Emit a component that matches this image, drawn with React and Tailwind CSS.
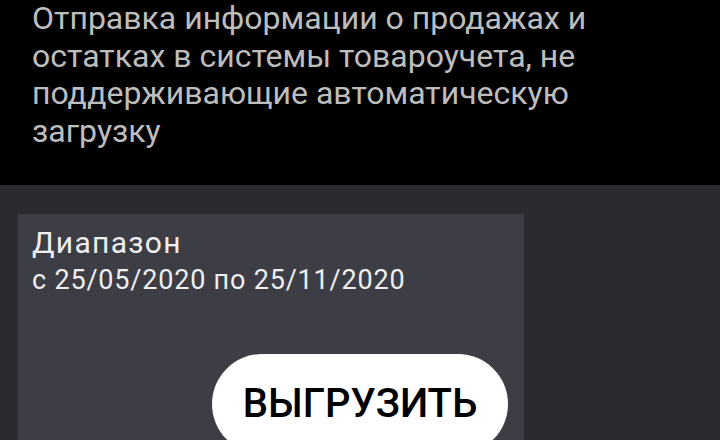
export default function App() {
  return (
    <div className="h-[440px] w-full overflow-hidden bg-[#2b2a30] font-['Roboto',sans-serif]">
      {/* Описание */}
      <div className="bg-black pl-8 pr-[60px] pb-[35px]">
        <p className="text-[32px] leading-[37.5px] text-[#bdbdbd]">
          Отправка информации о продажах и остатках в системы товароучета, не поддерживающие автоматическую загрузку
        </p>
      </div>

      {/* Карточка диапазона */}
      <div className="px-[18px] pt-[29px]">
        <div className="w-[506px] bg-[#3d3d46] pl-[14px] pr-4 pt-[12px]">
          <div className="text-[30px] leading-[34px] tracking-[1.3px] text-[#efefef]">Диапазон</div>
          <div className="mt-[5px] text-[27px] leading-[30px] tracking-[0.8px] text-[#efefef]">
            с 25/05/2020 по 25/11/2020
          </div>
          <div className="mt-[59px] flex justify-end">
            <button className="flex h-[100px] w-[296px] items-center justify-center rounded-full bg-white text-[40px] font-medium text-black">
              ВЫГРУЗИТЬ
            </button>
          </div>
        </div>
      </div>
    </div>
  );
}
